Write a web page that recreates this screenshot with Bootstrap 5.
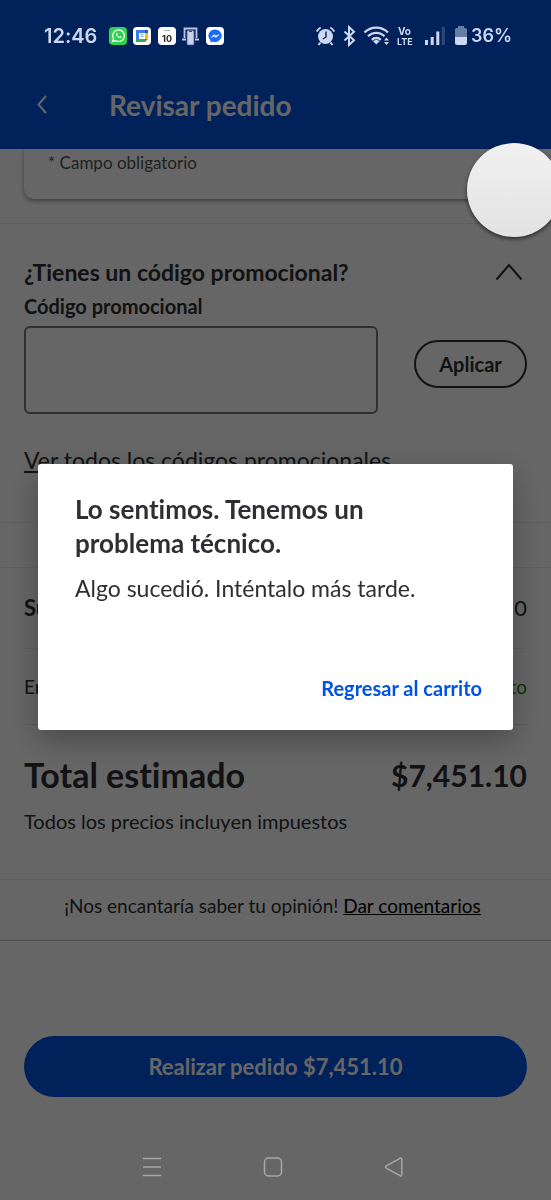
<!DOCTYPE html>
<html lang="es">
<head>
<meta charset="utf-8">
<meta name="viewport" content="width=device-width, initial-scale=1">
<title>Revisar pedido</title>
<link href="https://cdn.jsdelivr.net/npm/bootstrap@5.3.0/dist/css/bootstrap.min.css" rel="stylesheet">
<style>
  :root { --brand: #0053e2; --ink: #2e2f32; --rule: #ebecee; }
  body { font-family: Lato, "Noto Sans", sans-serif; font-variant-ligatures: none; color: var(--ink); font-size: 19px; line-height: 24px; background: #fff; }
  .app-head { background: var(--brand); color: #fff; padding-bottom: 12px; }
  /* system bars stay bright above the dimmed app */
  .sys-bar { position: relative; z-index: 1060; height: 72px; padding: 0 39px 0 44px; color: #cdd7f0; font-family: Inter, sans-serif; }
  .clock-text { font-size: 20px; font-weight: 600; }
  .battery-text { font-size: 18px; font-weight: 600; }
  .title-row { height: 65px; padding: 0 32px; gap: 57px; }
  .title-row h1 { font-size: 28px; line-height: 32px; }
  .back-btn { width: 20px; height: 32px; color: #fff; }
  .gutter { padding-left: 24px; padding-right: 24px; }
  .field-card { border-radius: 0 0 10px 10px; height: 50px; padding: 2px 24px; box-shadow: 0 2px 4px rgba(0,0,0,.4); font-size: 17px; color: #515357; clip-path: inset(0 -8px -8px -8px); }
  .full-rule { border-top: 1px solid var(--rule); }
  .promo { padding-top: 32px; height: 299px; }
  .promo h2 { font-size: 23px; line-height: 32px; }
  .promo label { font-size: 20px; line-height: 24px; margin: 6px 0 8px; }
  .promo-row { gap: 36px; }
  .promo-input { height: 88px; border: 2px solid #74767c; border-radius: 6px; }
  .apply-btn { width: 113px; height: 48px; margin-top: 14px; border: 2px solid var(--ink); border-radius: 24px; font-size: 20px; color: var(--ink); }
  .promo-link { font-size: 23px; line-height: 28px; margin-top: 32px; color: var(--ink); }
  .band { height: 45px; }
  .sum-row { height: 81px; border-bottom: 1px solid var(--rule); font-size: 22px; }
  .ship-row { height: 76px; border-bottom: 1px solid var(--rule); font-size: 19px; }
  .free-text { color: #2a8703; }
  .total-row { font-size: 34px; line-height: 40px; padding-top: 30px; }
  .total-price { font-size: 30px; }
  .tax-note { font-size: 20px; margin-top: 14px; padding-bottom: 46px; }
  .opinion { height: 62px; padding: 14px 6px 0 0; border-bottom: 1px solid #c8c9cb; border-top: 1px solid var(--rule); }
  .opinion a { color: #000; }
  .order-area { padding-top: 95px; }
  .order-btn { height: 61px; border-radius: 31px; background: var(--brand); color: #fff; font-size: 22px; }
  .nav-bar-sys { height: 66px; gap: 101px; padding-right: 6px; position: relative; z-index: 1060; color: #a8a8a8; }
  .dim { --bs-backdrop-opacity: .6; }
  .error-modal { padding-bottom: 6px; }
  .error-modal .modal-dialog { margin: 0 38px; max-width: none; min-height: 100%; }
  .error-modal .modal-content { border: 0; border-radius: 3px; box-shadow: 0 10px 30px rgba(0,0,0,.3); padding: 28px 31px 27px 37px; }
  .error-modal h2 { font-size: 26px; line-height: 34px; max-width: 340px; }
  .error-modal p { font-size: 23px; line-height: 30px; margin: 13px 0 70px; }
  .cart-btn { color: var(--brand); font-size: 20px; line-height: 30px; }
  .float-dot { position: fixed; top: 143px; right: -10px; width: 94px; height: 94px; border-radius: 50%; z-index: 1070; background: linear-gradient(#f1f1f1, #e2e2e2); box-shadow: 0 2px 4px rgba(0,0,0,.6); }
</style>
</head>
<body class="d-flex flex-column min-vh-100 overflow-x-hidden">
<header class="app-head">
  <div class="sys-bar d-flex align-items-center justify-content-between">
    <div class="d-flex align-items-center">
      <span class="clock-text me-2 pe-1">12:46</span>
      <svg width="118" height="20" viewBox="0 0 118 20" aria-hidden="true">
        <rect x="0" y="1" width="18" height="18" rx="4" fill="#2fd151"/>
        <path d="M3.6 15.6l.9-3.2A5.8 5.8 0 1 1 6.8 14.700z" fill="none" stroke="#fff" stroke-width="1.300"/>
        <path d="M7 7.200c.6-1 1.200-.6 1.600.8l-.5.8c.6 1.100 1.300 1.700 2.300 2.100l.8-.8c1.500.6 1.600 1 .8 1.800-1.700 1-5.600-2.300-5-4.700z" fill="#fff"/>
        <rect x="24" y="1" width="18" height="18" rx="4" fill="#fff"/>
        <path d="M27 4h9v3h-6v6h-3z" fill="#3b7ded"/><path d="M36 4h3v3h-3z" fill="#1e5ac8"/><path d="M36 7h3v6h-3z" fill="#fbbc04"/><path d="M27 13h9v3h-9z" fill="#34a853"/><path d="M36 13h3l-3 3z" fill="#ea4335"/>
        <path d="M31.500 8.500h3M31.500 10.500h3" stroke="#7da7ee"/>
        <rect x="49" y="1" width="18" height="18" rx="4" fill="#fff"/>
        <path d="M55 4.500h6" stroke="#9db4d8"/>
        <text x="58" y="15.500" text-anchor="middle" font-family="Inter, sans-serif" font-size="9" font-weight="700" fill="#222">10</text>
        <path d="M75.500 12V2.500h12V12M73 13.500h4M86 13.500h4" fill="none" stroke="#b9c4e0" stroke-width="1.800"/>
        <rect x="78" y="4.500" width="7" height="14.500" rx="1" fill="#c9d2e8" stroke="#4b5d8d" stroke-width=".8"/>
        <path d="M80 5.500h3" stroke="#33477c"/>
        <rect x="97" y="1" width="18" height="18" rx="4" fill="#fff"/>
        <path d="M106 3.500a6.500 6.200 0 0 0-4.600 10.600v2.400l2.200-1.100A6.500 6.200 0 1 0 106 3.500z" fill="#1769ff"/>
        <path d="M102.300 11.500l2.800-3 1.800 1.700 2.900-1.700-2.900 3-1.700-1.700z" fill="#fff" stroke="#fff" stroke-width=".7"/>
      </svg>
    </div>
    <div class="d-flex align-items-center">
      <svg width="156" height="24" viewBox="317 24 156 24" aria-hidden="true" fill="none" stroke="currentColor">
        <circle cx="327.500" cy="36.500" r="7.500" fill="currentColor" stroke="none"/>
        <path d="M318.700 31.500a12 12 0 0 1 4-4M332.300 27.500a12 12 0 0 1 4 4M322.500 42.500l-2 2.500M332.500 42.500l2 2.500" stroke-width="2"/>
        <path d="M328 31.500v5.500l-3 2" stroke="#00215a" stroke-width="1.400"/>
        <path d="M346.500 31.500l9.500 8.800-5 4.700V27l5 4.700-9.500 8.800" stroke-width="2"/>
        <path d="M366.500 32.500a16.500 16.500 0 0 1 23.500 0M370 36.300a11.600 11.600 0 0 1 16.500 0M373.800 39.800a6.500 6.500 0 0 1 9 0" stroke-width="2.300"/>
        <path d="M375 41.300a4.800 4.800 0 0 1 6.600 0l-3.300 3.200z" fill="currentColor" stroke="none"/>
        <path d="M386 40.500l2.500-3 2.500 3zM386 42l2.500 3 2.500-3z" fill="currentColor" stroke="none"/>
        <text x="400" y="35" font-family="Inter, sans-serif" font-size="10" font-weight="700" fill="currentColor" stroke="none">Vo</text>
        <text x="399" y="45" font-family="Inter, sans-serif" font-size="9" font-weight="700" fill="currentColor" stroke="none">LTE</text>
        <path d="M428.500 45v-5M434.200 45v-8M439.800 45V31.500" stroke-width="3"/>
        <path d="M445.300 45V27" stroke-width="3" opacity=".22"/>
        <path d="M457 38V29.500q0-1.500 1.500-1.500h1.500v-2h6v2h1.500q1.500 0 1.500 1.500V38z" fill="currentColor" stroke="none" opacity=".5"/>
        <path d="M457 37h12v6q0 2-2 2h-8q-2 0-2-2z" fill="currentColor" stroke="none"/>
      </svg>
      <span class="battery-text">36%</span>
    </div>
  </div>
  <div class="title-row d-flex align-items-center">
    <button type="button" class="btn back-btn border-0 p-0 d-flex align-items-center justify-content-center" aria-label="Atrás">
      <svg width="12" height="20" viewBox="0 0 12 20" fill="none" stroke="currentColor" stroke-width="2" aria-hidden="true"><path d="M10 1L2.500 9.500L10 18"/></svg>
    </button>
    <h1 class="fw-bold m-0">Revisar pedido</h1>
  </div>
</header>

<main class="flex-grow-1">
  <div class="gutter pb-4"><div class="field-card">* Campo obligatorio</div></div>

  <section class="promo gutter full-rule">
    <div class="d-flex align-items-center justify-content-between">
      <h2 class="fw-bold m-0">¿Tienes un código promocional?</h2>
      <button type="button" class="btn border-0 p-0 d-flex pe-1" aria-label="Contraer">
        <svg width="28" height="18" viewBox="0 0 28 18" fill="none" stroke="#2e2f32" stroke-width="2" aria-hidden="true"><path d="M1.500 16.500L14 2l12.500 14.500"/></svg>
      </button>
    </div>
    <label for="promo" class="fw-bold d-block">Código promocional</label>
    <div class="promo-row d-flex align-items-start">
      <input id="promo" type="text" class="form-control promo-input flex-grow-1">
      <button type="button" class="btn apply-btn flex-shrink-0 fw-bold p-0">Aplicar</button>
    </div>
    <a href="#" class="promo-link d-inline-block">Ver todos los códigos promocionales</a>
  </section>

  <div class="band full-rule"></div>

  <section class="gutter full-rule">
    <div class="sum-row d-flex align-items-center justify-content-between"><span class="fw-bold">Subtotal</span><span>$7,451.10</span></div>
    <div class="ship-row d-flex align-items-center justify-content-between"><span>Envío</span><span class="free-text">Gratuito</span></div>
    <div class="total-row d-flex justify-content-between fw-bold"><span>Total estimado</span><span class="total-price">$7,451.10</span></div>
    <p class="tax-note mb-0">Todos los precios incluyen impuestos</p>
  </section>

  <div class="opinion text-center">¡Nos encantaría saber tu opinión! <a href="#">Dar comentarios</a></div>

  <div class="order-area gutter">
    <button type="button" class="btn order-btn w-100 fw-bold border-0 p-0">Realizar pedido $7,451.10</button>
  </div>
</main>

<footer class="nav-bar-sys d-flex align-items-center justify-content-center">
  <svg width="20" height="20" viewBox="0 0 20 20" fill="none" stroke="currentColor" stroke-width="1.500" aria-hidden="true"><path d="M1 1.500h18M1 10h18M1 18.500h18"/></svg>
  <svg width="20" height="20" viewBox="0 0 20 20" fill="none" stroke="currentColor" stroke-width="1.500" aria-hidden="true"><rect x="1.500" y="1" width="17" height="18" rx="4"/></svg>
  <svg width="20" height="20" viewBox="0 0 20 20" fill="none" stroke="currentColor" stroke-width="1.500" stroke-linejoin="round" aria-hidden="true"><path d="M2.300 8.900L16 1.300q1.800-.7 1.800 1.200v15q0 1.900-1.800 1.200L2.300 11.100q-1.600-1.100 0-2.200z"/></svg>
</footer>

<div class="modal-backdrop show dim"></div>
<div class="modal d-block error-modal" role="dialog" aria-modal="true" aria-labelledby="err-title">
  <div class="modal-dialog modal-dialog-centered">
    <div class="modal-content">
      <h2 id="err-title" class="fw-bold m-0">Lo sentimos. Tenemos un problema técnico.</h2>
      <p>Algo sucedió. Inténtalo más tarde.</p>
      <div class="text-end"><button type="button" class="btn cart-btn fw-bold border-0 p-0">Regresar al carrito</button></div>
    </div>
  </div>
</div>
<div class="float-dot" aria-hidden="true"></div>
<script src="https://cdn.jsdelivr.net/npm/bootstrap@5.3.0/dist/js/bootstrap.bundle.min.js"></script>
</body>
</html>
